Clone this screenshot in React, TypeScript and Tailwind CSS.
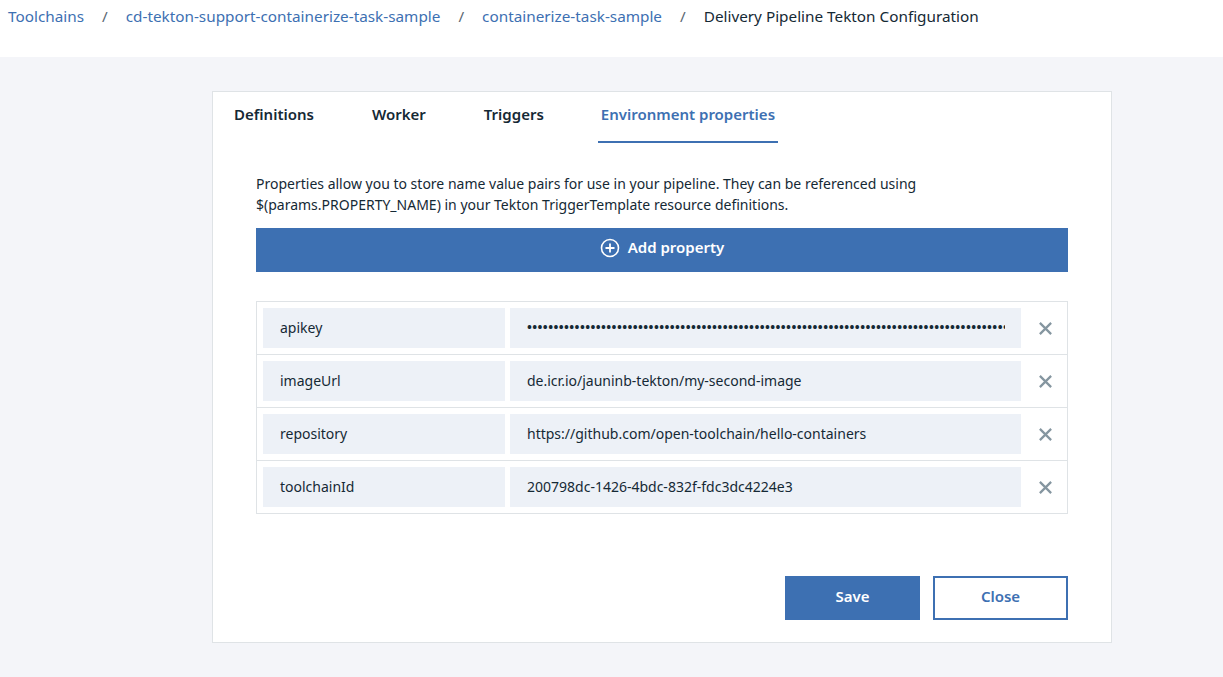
import React from 'react';

const font = { fontFamily: '"Noto Sans", "Open Sans", sans-serif' };

const crumbs = [
  'Toolchains',
  'cd-tekton-support-containerize-task-sample',
  'containerize-task-sample',
];

const tabs = [
  { label: 'Definitions', ml: 'ml-0' },
  { label: 'Worker', ml: 'ml-[52px]' },
  { label: 'Triggers', ml: 'ml-[52px]' },
  { label: 'Environment properties', ml: 'ml-[51px]', active: true },
];

const props = [
  { name: 'apikey', value: '', secret: true },
  { name: 'imageUrl', value: 'de.icr.io/jauninb-tekton/my-second-image' },
  { name: 'repository', value: 'https://github.com/open-toolchain/hello-containers' },
  { name: 'toolchainId', value: '200798dc-1426-4bdc-832f-fdc3dc4224e3' },
];

const CloseIcon = () => (
  <svg width="15" height="15" viewBox="0 0 16 16" fill="none">
    <path d="M2 2 L14 14 M14 2 L2 14" stroke="#8596a0" strokeWidth="2.4" />
  </svg>
);

const PlusCircle = () => (
  <svg width="20" height="20" viewBox="0 0 20 20" fill="none">
    <circle cx="10" cy="10" r="8.5" stroke="white" strokeWidth="1.6" />
    <path d="M10 5.5 V14.5 M5.5 10 H14.5" stroke="white" strokeWidth="1.8" />
  </svg>
);

export default function App() {
  return (
    <div className="min-h-[677px] bg-[#f4f5f9] text-[#152935]" style={font}>
      {/* Breadcrumbs */}
      <div className="h-[57px] bg-white flex items-start pt-[5px] pl-2 text-[15.3px]">
        {crumbs.map((c) => (
          <React.Fragment key={c}>
            <span className="text-[#3d70b2]">{c}</span>
            <span className="text-[#5a6872] mx-[18px]">/</span>
          </React.Fragment>
        ))}
        <span className="text-[#152935]">Delivery Pipeline Tekton Configuration</span>
      </div>

      <div className="ml-[212px] mt-[34px] w-[900px] bg-white border border-[#dfe3e6] pb-[22px]">
        {/* Tabs */}
        <div className="flex pl-[18px] h-[51px]">
          {tabs.map((t) => (
            <div
              key={t.label}
              className={`${t.ml} px-[3px] pt-[11px] text-[15px] font-semibold ${
                t.active ? 'text-[#3d70b2] border-b-2 border-[#3d70b2]' : 'text-[#152935]'
              }`}
            >
              {t.label}
            </div>
          ))}
        </div>

        <div className="px-[43px] pt-[30px]">
          <p className="text-[14px] leading-[21px]">
            Properties allow you to store name value pairs for use in your pipeline. They can be referenced using
            <br />
            $(params.PROPERTY_NAME) in your Tekton TriggerTemplate resource definitions.
          </p>

          <button className="mt-[13px] w-full h-[44px] pb-[5px] bg-[#3d70b2] text-white font-semibold text-[15px] flex items-center justify-center gap-[8px]">
            <PlusCircle />
            Add property
          </button>

          {/* Property table */}
          <div className="mt-[29px] border border-[#dfe3e6]">
            {props.map((p, i) => (
              <div
                key={p.name}
                className={`flex items-center pl-[6px] py-[6px] ${i > 0 ? 'border-t border-[#dfe3e6]' : ''}`}
              >
                <div className="w-[242px] h-[40px] bg-[#edf1f7] flex items-center pl-[17px] pb-[1px] text-[14px]">
                  {p.name}
                </div>
                <div className="ml-[5px] w-[511px] h-[40px] bg-[#edf1f7] flex items-center pl-[17px] pr-[16px] pb-[1px] text-[14px] overflow-hidden whitespace-nowrap">
                  {p.secret ? (
                    <div className="w-[478px] overflow-hidden text-[13px] tracking-[0.4px] font-bold">
                      {'•'.repeat(110)}
                    </div>
                  ) : (
                    p.value
                  )}
                </div>
                <div className="flex-1 flex justify-center pl-[2px]">
                  <CloseIcon />
                </div>
              </div>
            ))}
          </div>

          <div className="mt-[62px] flex justify-end gap-[13px]">
            <button className="w-[135px] h-[44px] pb-[4px] bg-[#3d70b2] text-white font-semibold text-[15px]">Save</button>
            <button className="w-[135px] h-[44px] pb-[4px] border-2 border-[#3d70b2] text-[#3d70b2] font-semibold text-[15px] bg-white">
              Close
            </button>
          </div>
        </div>
      </div>
    </div>
  );
}
